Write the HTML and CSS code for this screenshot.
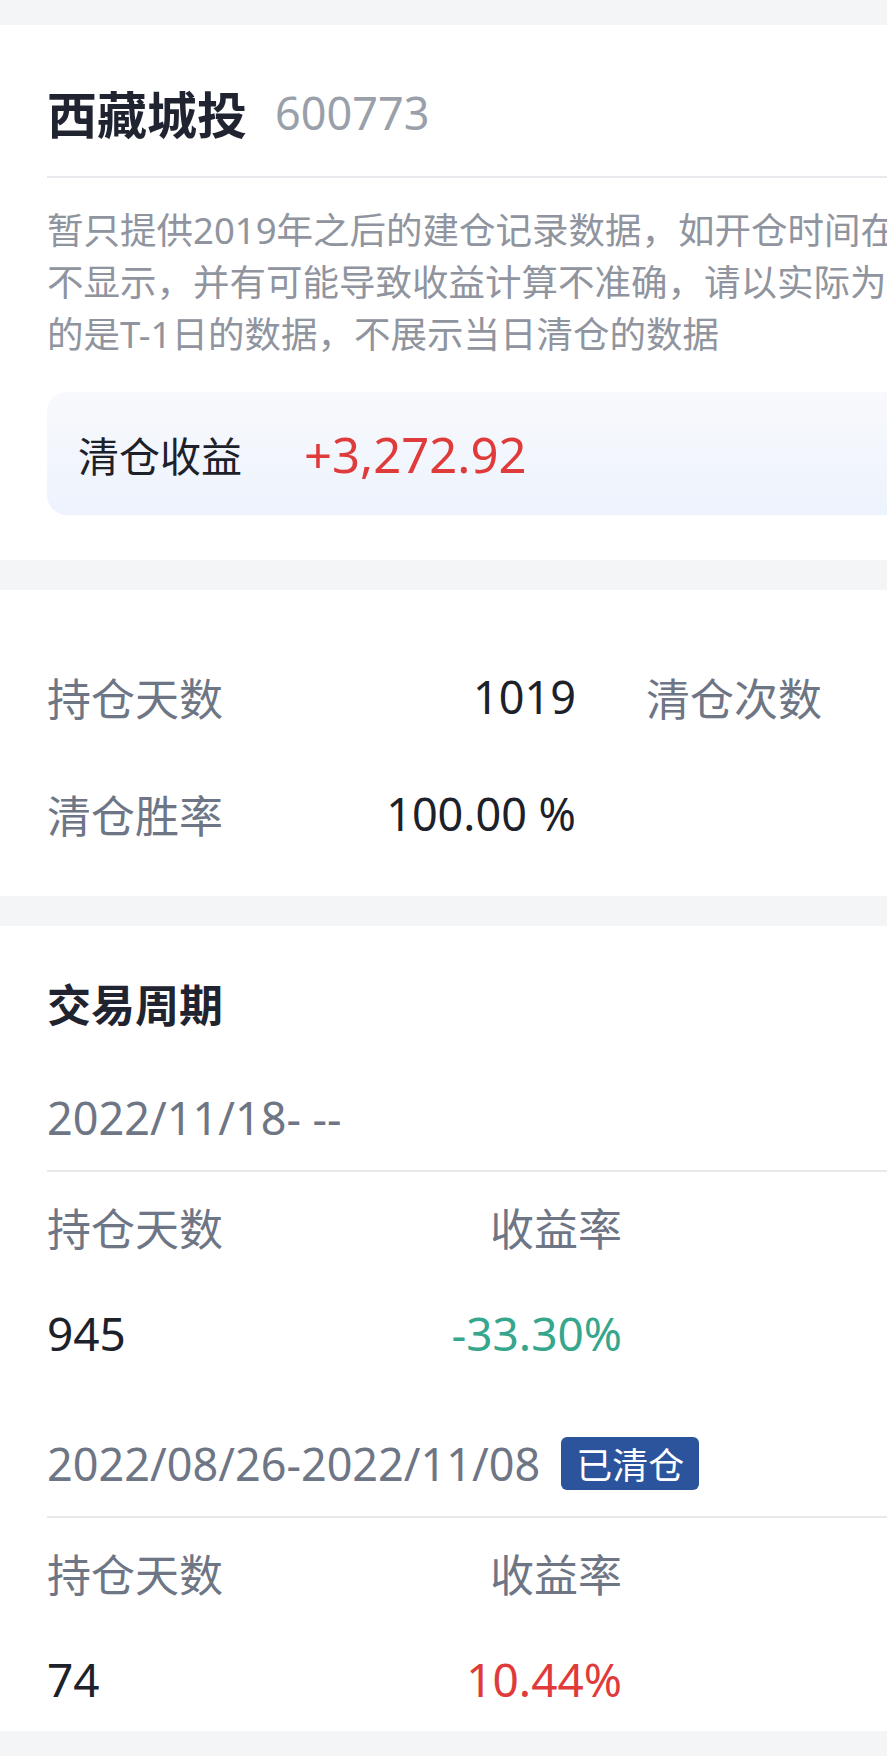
FILE: index.html
```html
<!DOCTYPE html>
<html lang="zh-CN">
<head>
    <meta charset="UTF-8">
    <meta name="viewport" content="width=device-width, initial-scale=1.0">
    <title>西藏城投 清仓记录</title>
    <link rel="stylesheet" href="styles.css">
</head>
<body>
    <div class="page">
        <div class="card summary">
            <div class="stock-head">
                <span class="stock-name">西藏城投</span>
                <span class="stock-code">600773</span>
            </div>
            <p class="notice">暂只提供2019年之后的建仓记录数据，如开仓时间在2019年之前，则<br>不显示，并有可能导致收益计算不准确，请以实际为准。展示<br>的是T-1日的数据，不展示当日清仓的数据</p>
            <div class="profit-box">
                <span class="profit-label">清仓收益</span>
                <span class="profit-value up">+3,272.92</span>
            </div>
        </div>

        <div class="card stats">
            <div class="stat">
                <span class="stat-label">持仓天数</span>
                <span class="stat-value">1019</span>
            </div>
            <div class="stat">
                <span class="stat-label">清仓次数</span>
                <span class="stat-value">1</span>
            </div>
            <div class="stat">
                <span class="stat-label">清仓胜率</span>
                <span class="stat-value">100.00 %</span>
            </div>
        </div>

        <div class="card cycles">
            <h2 class="section-title">交易周期</h2>

            <div class="cycle">
                <div class="cycle-head">
                    <span class="cycle-date">2022/11/18- --</span>
                </div>
                <div class="cycle-grid">
                    <span class="cycle-label">持仓天数</span>
                    <span class="cycle-label right">收益率</span>
                    <span class="cycle-value">945</span>
                    <span class="cycle-value right down">-33.30%</span>
                </div>
            </div>

            <div class="cycle">
                <div class="cycle-head">
                    <span class="cycle-date">2022/08/26-2022/11/08</span>
                    <span class="badge">已清仓</span>
                </div>
                <div class="cycle-grid">
                    <span class="cycle-label">持仓天数</span>
                    <span class="cycle-label right">收益率</span>
                    <span class="cycle-value">74</span>
                    <span class="cycle-value right up">10.44%</span>
                </div>
            </div>
        </div>
    </div>
</body>
</html>
```

FILE: styles.css
```css
html, body {
    margin: 0;
    padding: 0;
    overflow: hidden;
}

body {
    font-family: "Noto Sans", "Noto Sans CJK SC", sans-serif;
    background-color: #f4f5f7;
    color: #1d212a;
}

.page {
    width: 1180px;
    padding-top: 25px;
    display: flex;
    flex-direction: column;
    gap: 30px;
}

.card {
    background: #fff;
    padding-left: 47px;
}

/* summary card */
.summary {
    padding-top: 47px;
    padding-bottom: 45px;
}

.stock-head {
    height: 80px;
    display: flex;
    align-items: center;
    gap: 28px;
    padding-bottom: 24px;
    border-bottom: 2px solid #e8e9ec;
}

.stock-name {
    font-size: 50px;
    font-weight: 700;
    color: #1f2430;
}

.stock-code {
    font-size: 45px;
    color: #9aa0aa;
}

.notice {
    margin: 26px 0 0;
    font-size: 36.5px;
    line-height: 52px;
    color: #8f949e;
    white-space: nowrap;
}

.profit-box {
    margin-top: 32px;
    height: 123px;
    padding-left: 31px;
    display: flex;
    align-items: center;
    gap: 62px;
    border-radius: 20px;
    background: linear-gradient(180deg, #f8f9fc, #edf3fd);
}

.profit-label {
    font-size: 41px;
    color: #1d212a;
}

.profit-value {
    font-size: 49px;
}

/* stats card */
.stats {
    padding-top: 48px;
    padding-bottom: 24px;
    display: grid;
    grid-template-columns: 529px 529px;
    column-gap: 70px;
}

.stat {
    height: 117px;
    display: flex;
    align-items: center;
    justify-content: space-between;
}

.stat-label {
    font-size: 44px;
    color: #6e7686;
}

.stat-value {
    font-size: 45px;
    color: #1d212a;
}

/* cycles card */
.cycles {
    padding-top: 39px;
    padding-bottom: 22px;
}

.section-title {
    margin: 0;
    height: 80px;
    line-height: 80px;
    font-size: 44px;
    font-weight: 700;
    color: #1f2430;
}

.cycle-head {
    height: 60px;
    padding-bottom: 23px;
    display: flex;
    align-items: center;
    gap: 21px;
    border-bottom: 2px solid #e8e9ec;
}

.cycle:first-of-type .cycle-head {
    margin-top: 42px;
}

.cycle + .cycle .cycle-head {
    margin-top: 70px;
}

.cycle-date {
    font-size: 45px;
    color: #6e7686;
}

.badge {
    height: 53px;
    padding: 0 15px;
    display: flex;
    align-items: center;
    font-size: 36px;
    color: #fff;
    background-color: #2c549c;
    border-radius: 6px;
}

.cycle-grid {
    display: grid;
    grid-template-columns: 290px 285px;
    grid-template-rows: 60px 60px;
    row-gap: 46px;
    padding-top: 25px;
    align-items: center;
}

.cycle-label {
    font-size: 44px;
    color: #6e7686;
}

.cycle-value {
    font-size: 46px;
    color: #1d212a;
}

.right {
    text-align: right;
}

/* profit colours */
.up,
.cycle-value.up {
    color: #e03b3b;
}

.down,
.cycle-value.down {
    color: #36a68c;
}
```
